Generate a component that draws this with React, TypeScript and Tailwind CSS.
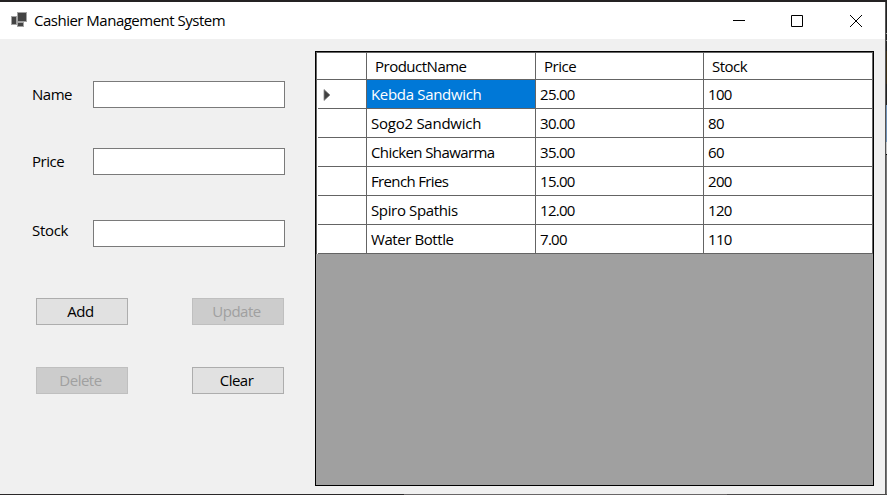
import type { ReactNode } from "react";

const products = [
  ["Kebda Sandwich", "25.00", "100"],
  ["Sogo2 Sandwich", "30.00", "80"],
  ["Chicken Shawarma", "35.00", "60"],
  ["French Fries", "15.00", "200"],
  ["Spiro Spathis", "12.00", "120"],
  ["Water Bottle", "7.00", "110"],
];

// Tracking for cell texts, so that each fills its usual Segoe-like width.
const tracking: Record<string, string> = {
  "Kebda Sandwich": "tracking-[-0.32px]",
  "Sogo2 Sandwich": "tracking-[-0.25px]",
  "Chicken Shawarma": "tracking-[-0.6px]",
  "French Fries": "tracking-[-0.65px]",
  "Spiro Spathis": "tracking-[-0.36px]",
  "Water Bottle": "tracking-[-0.42px]",
};

function TitleBar() {
  return (
    <header className="flex h-[37px] items-center bg-white pl-[11px]">
      <svg width="17" height="16" viewBox="0 0 17 16" shapeRendering="crispEdges" className="-mt-px">
        <path fill="#a3a3a3" d="M0 4h6v9H0zM6 0h10v10H6zM6 10h7v5H6z" />
        <path fill="#434343" d="M1 5h4v7H1zM7 1h8v8H7zM7 11h5v3H7z" />
      </svg>
      <h1 className="mb-[2px] ml-[6px] flex-1 leading-5">Cashier Management System</h1>
      <svg width="130" height="14" viewBox="0 0 130 14" fill="none" stroke="#000" className="mr-[22px]">
        <path d="M0 6.5h12" />
        <path d="M58.5 1.5h11v11h-11z" />
        <path d="M117 1l12 12M129 1l-12 12" />
      </svg>
    </header>
  );
}

function Field({ label, className, labelClass }: { label: string; className: string; labelClass: string }) {
  return (
    <label className={`flex h-[27px] items-center ${className}`}>
      <span className={`w-[61px] leading-5 ${labelClass}`}>{label}</span>
      <input className="h-[27px] w-[192px] border border-[#7a7a7a] bg-white px-1 outline-none" />
    </label>
  );
}

function Button({ children, disabled }: { children: ReactNode; disabled?: boolean }) {
  return (
    <button
      disabled={disabled}
      className={`flex h-[27px] w-[92px] items-center justify-center border pr-[3px] ${
        disabled ? "border-[#bfbfbf] bg-[#cccccc] text-[#a0a0a0]" : "border-[#adadad] bg-[#e1e1e1]"
      }`}
    >
      {children}
    </button>
  );
}

function ProductGrid() {
  return (
    <section className="h-[435px] w-[559px] border border-black bg-[#a0a0a0]">
      <div className="border-l border-t border-[#646464]">
        <div className="grid h-[27px] grid-cols-[50px_169px_168px_169px] bg-white">
          <div className="border-b border-r border-[#646464]" />
          {["ProductName", "Price", "Stock"].map((title) => (
            <div key={title} className="border-b border-r border-[#646464] pl-2 leading-[26px]">
              {title}
            </div>
          ))}
        </div>
        {products.map((row, index) => (
          <div key={row[0]} className="grid h-[29px] grid-cols-[50px_169px_168px_169px] bg-white">
            <div className="ml-px flex items-center border-b border-r border-[#646464] pl-[5px]">
              {index === 0 && (
                <svg width="8" height="12" viewBox="0 0 8 12" className="mt-[2px]">
                  <path d="M1 .5v11L7 6z" fill="#404040" stroke="#888" strokeWidth=".8" />
                </svg>
              )}
            </div>
            {row.map((value, column) => (
              <div
                key={column}
                className={`border-b border-r border-[#646464] pl-1 leading-[28px] ${tracking[value] ?? "tracking-[-0.7px]"} ${
                  index === 0 && column === 0 ? "bg-[#0078d7] text-white" : ""
                }`}
              >
                {value}
              </div>
            ))}
          </div>
        ))}
      </div>
    </section>
  );
}

export default function App() {
  return (
    <div className="flex h-[495px] w-[887px] flex-col overflow-hidden bg-[#292728] font-['Open_Sans','Noto_Sans',sans-serif] text-[15px] tracking-[-0.5px] text-black">
      <div className="h-[2px] bg-[#242223]" />
      <div className="flex h-[492px]">
        <div className="flex w-[885px] flex-col bg-[#f0f0f0]">
          <TitleBar />
          <main className="flex pt-[12px]">
            <form className="w-[315px] pl-8 pt-[30px]">
              <Field label="Name" className="" labelClass="mb-[2px]" />
              <Field label="Price" className="mt-10" labelClass="mb-[2px]" />
              <Field label="Stock" className="mt-[45px]" labelClass="mb-[8px] tracking-[-0.3px]" />
              <div className="ml-1 mt-[51px] grid w-[248px] grid-cols-[92px_92px] justify-between gap-y-[42px]">
                <Button>Add</Button>
                <Button disabled>Update</Button>
                <Button disabled>Delete</Button>
                <Button>Clear</Button>
              </div>
            </form>
            <ProductGrid />
          </main>
        </div>
        <div className="w-px bg-[#555]" />
        <div className="flex w-px flex-col">
          <div className="h-[31px] bg-[#222]" />
          <div className="h-px bg-[#999]" />
          <div className="h-[6px] bg-[#222]" />
          <div className="h-px bg-[#888]" />
          <div className="h-[10px] bg-[#222]" />
          <div className="h-[33px] bg-[#3b2d15]" />
          <div className="h-[21px] bg-[#222]" />
          <div className="h-[37px] bg-[#6f92b8]" />
          <div className="h-[12px] bg-[#c4c4c4]" />
          <div className="h-px bg-black" />
          <div className="flex-1 bg-[#777]" />
        </div>
      </div>
      <div className="flex h-px">
        <div className="w-[404px] bg-[#2a2829]" />
        <div className="w-[323px] bg-[#696667]" />
        <div className="flex-1 bg-[#4b494a]" />
      </div>
    </div>
  );
}
